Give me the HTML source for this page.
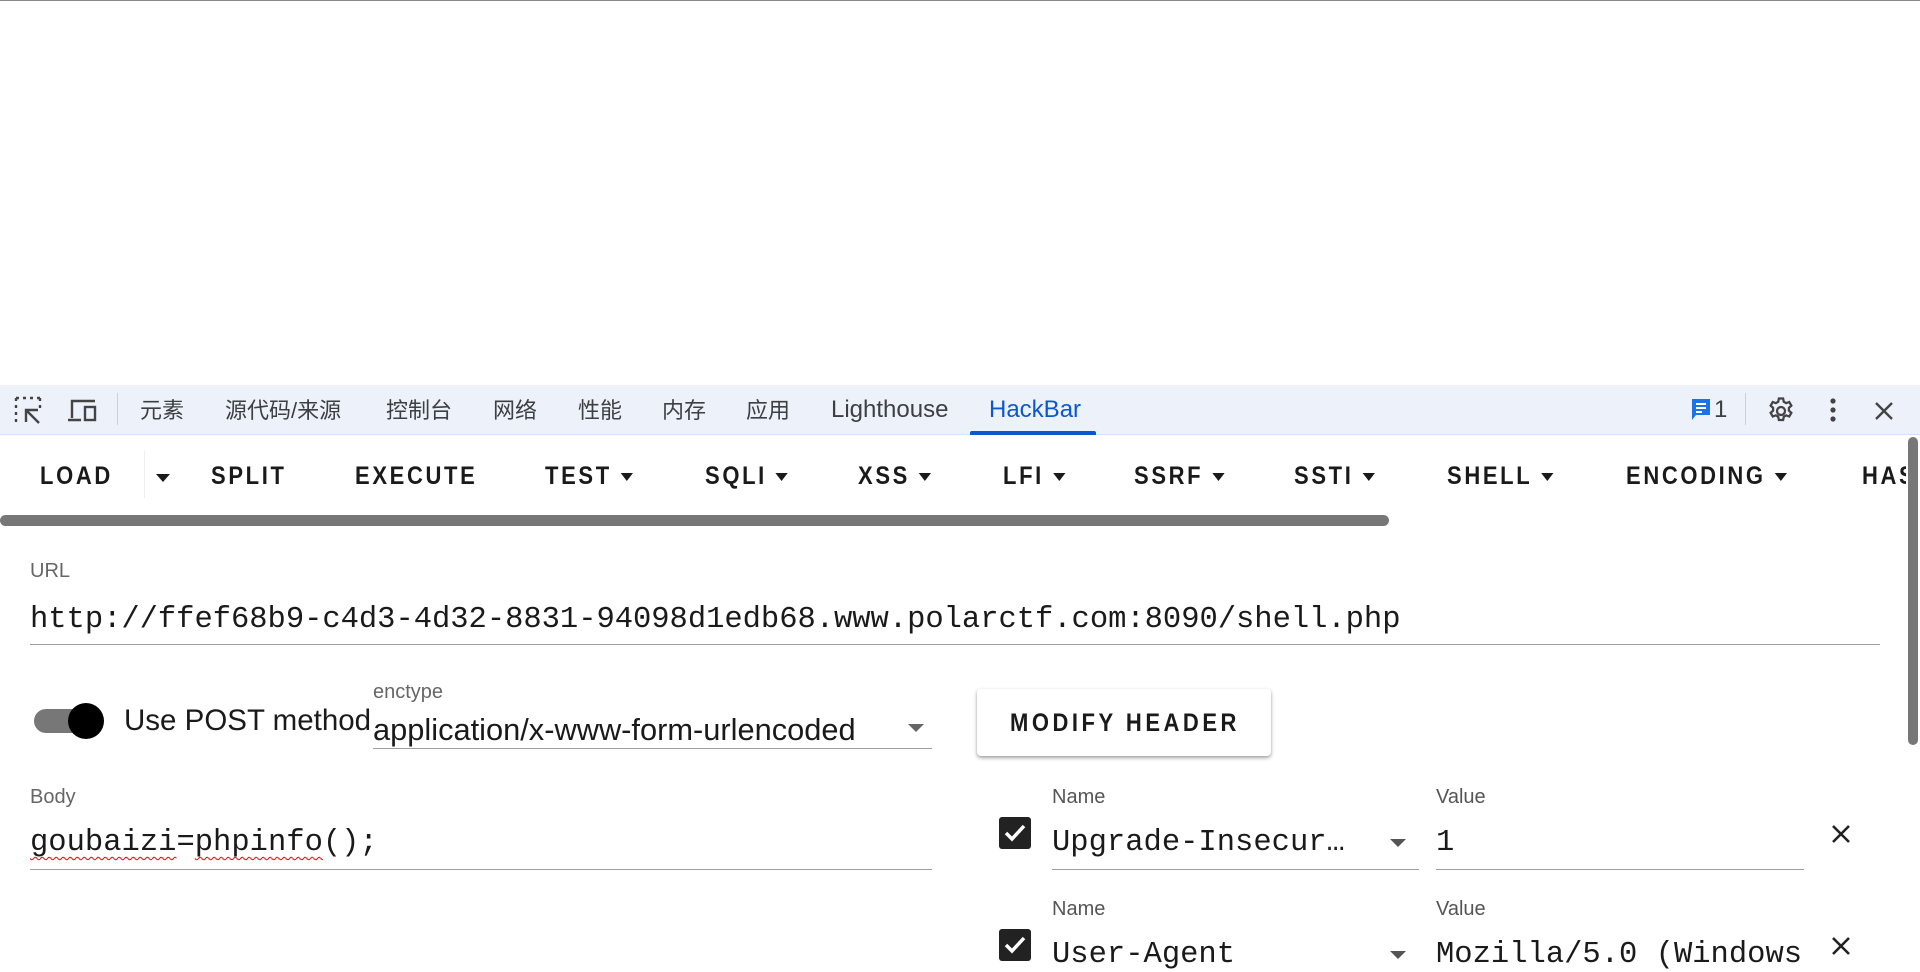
<!DOCTYPE html>
<html><head><meta charset="utf-8"><style>
*{margin:0;padding:0;box-sizing:border-box}
body{width:1920px;height:971px;overflow:hidden;background:#fff;font-family:"Liberation Sans","Noto Sans CJK SC",sans-serif;position:relative;color:#202124}
.a{position:absolute;white-space:nowrap}
.tab{position:absolute;top:397px;font-size:22px;line-height:28px;height:28px;color:#3c4043}
.lat{font-size:24px;top:396px}
.tb{position:absolute;top:462px;font-size:25px;font-weight:bold;letter-spacing:3px;color:#1a1a1a;transform:scaleX(.88);transform-origin:left}
.car{display:inline-block;width:0;height:0;border-left:7px solid transparent;border-right:7px solid transparent;border-top:8px solid #1a1a1a;vertical-align:middle;margin-left:10px}
.lbl{position:absolute;font-size:20px;color:#666}
.mono{position:absolute;font-family:"Liberation Mono",monospace;font-size:30.5px;color:#1a1a1a}
.ul{position:absolute;height:1px;background:#9e9e9e}
.cb{position:absolute;width:32px;height:32px;background:#222;border-radius:3px}
.w{text-decoration:underline wavy #e00;text-decoration-thickness:1px;text-underline-offset:6px}
</style></head><body>
<div class="a" style="left:0;top:0;width:1920px;height:1px;background:#888"></div>
<div class="a" style="left:0;top:385px;width:1920px;height:50px;background:#edf2fa;border-bottom:1px solid #d3e3fd"></div>
<svg class="a" style="left:14px;top:396px" width="32" height="28" viewBox="0 0 32 28" fill="none" stroke="#444" stroke-width="2.4"><path d="M2 2h3M9 2h3M16 2h3M23 2h3M2 2v3M2 9v3M2 16v3M2 23v3M26 2v3M26 9v3"/><path d="M12 26V14h12M12 14l13 13"/></svg>
<svg class="a" style="left:67px;top:398px" width="32" height="26" viewBox="0 0 32 26" fill="none" stroke="#444" stroke-width="2.4"><path d="M5 20V3h23M1 22h13"/><rect x="18" y="9" width="10" height="13"/></svg>
<div class="a" style="left:117px;top:393px;width:1px;height:32px;background:#c8d0dc"></div>
<div class="tab" style="left:140px">元素</div>
<div class="tab" style="left:225px">源代码/来源</div>
<div class="tab" style="left:386px">控制台</div>
<div class="tab" style="left:493px">网络</div>
<div class="tab" style="left:578px">性能</div>
<div class="tab" style="left:662px">内存</div>
<div class="tab" style="left:746px">应用</div>
<div class="tab lat" style="left:831px">Lighthouse</div>
<div class="tab lat" style="left:989px;color:#0b57d0">HackBar</div>
<div class="a" style="left:970px;top:431px;width:126px;height:4px;background:#0b57d0;border-radius:2px 2px 0 0"></div>
<svg class="a" style="left:1690px;top:398px" width="22" height="24" viewBox="0 0 22 24"><path d="M2 1h18v16H6l-4 5z" fill="#1a73e8"/><path d="M6 6h10M6 10h10M6 14h6" stroke="#fff" stroke-width="2"/></svg>
<div class="tab lat" style="left:1714px">1</div>
<div class="a" style="left:1745px;top:393px;width:1px;height:32px;background:#c8d0dc"></div>
<svg class="a" style="left:1766px;top:396px" width="30" height="30" viewBox="0 0 24 24" fill="none" stroke="#444" stroke-width="1.8"><circle cx="12" cy="12" r="3.2"/><path d="M10.3 2h3.4l.5 2.6 1.9 1.1 2.5-.9 1.7 2.9-2 1.8v2.2l2 1.8-1.7 2.9-2.5-.9-1.9 1.1-.5 2.6h-3.4l-.5-2.6-1.9-1.1-2.5.9-1.7-2.9 2-1.8v-2.2l-2-1.8 1.7-2.9 2.5.9 1.9-1.1z"/></svg>
<svg class="a" style="left:1827px;top:397px" width="12" height="28"><circle cx="6" cy="4" r="2.6" fill="#444"/><circle cx="6" cy="13" r="2.6" fill="#444"/><circle cx="6" cy="22" r="2.6" fill="#444"/></svg>
<svg class="a" style="left:1873px;top:400px" width="22" height="22" stroke="#444" stroke-width="2.4"><path d="M3 3l16 16M19 3L3 19"/></svg>

<div class="tb" style="left:40px">LOAD</div>
<div class="a" style="left:144px;top:450px;width:1px;height:48px;background:#eee"></div>
<div class="a" style="left:146px;top:469px"><span class="car"></span></div>
<div class="tb" style="left:211px">SPLIT</div>
<div class="tb" style="left:355px">EXECUTE</div>
<div class="tb" style="left:545px">TEST<span class="car"></span></div>
<div class="tb" style="left:705px">SQLI<span class="car"></span></div>
<div class="tb" style="left:858px">XSS<span class="car"></span></div>
<div class="tb" style="left:1003px">LFI<span class="car"></span></div>
<div class="tb" style="left:1134px">SSRF<span class="car"></span></div>
<div class="tb" style="left:1294px">SSTI<span class="car"></span></div>
<div class="tb" style="left:1447px">SHELL<span class="car"></span></div>
<div class="tb" style="left:1626px">ENCODING<span class="car"></span></div>
<div class="tb" style="left:1862px">HASH</div>
<div class="a" style="left:1906px;top:435px;width:14px;height:536px;background:#fff"></div>
<div class="a" style="left:0;top:515px;width:1389px;height:11px;background:#777;border-radius:6px"></div>
<div class="a" style="left:1908px;top:437px;width:10px;height:308px;background:#777;border-radius:5px"></div>

<div class="lbl" style="left:30px;top:560px">URL</div>
<div class="mono" style="left:30px;top:603px;letter-spacing:-0.03px">http://ffef68b9-c4d3-4d32-8831-94098d1edb68.www.polarctf.com:8090/shell.php</div>
<div class="ul" style="left:30px;top:644px;width:1850px"></div>

<div class="a" style="left:34px;top:709px;width:68px;height:24px;background:#777;border-radius:12px"></div>
<div class="a" style="left:68px;top:703px;width:36px;height:36px;background:#000;border-radius:50%"></div>
<div class="a" style="left:124px;top:704px;font-size:29.5px;color:#1a1a1a">Use POST method</div>
<div class="lbl" style="left:373px;top:681px">enctype</div>
<div class="a" style="left:373px;top:712px;font-size:30.8px;color:#1a1a1a">application/x-www-form-urlencoded</div>
<div class="a" style="left:898px;top:719px"><span class="car" style="border-top-color:#666;border-left-width:8px;border-right-width:8px;border-top-width:8px"></span></div>
<div class="ul" style="left:373px;top:748px;width:559px"></div>
<div class="a" style="left:977px;top:689px;width:294px;height:67px;background:#fff;border-radius:4px;box-shadow:0 2px 4px rgba(0,0,0,.3),0 1px 2px rgba(0,0,0,.15)"></div>
<div class="tb" style="left:1010px;top:709px;letter-spacing:4px">MODIFY HEADER</div>

<div class="lbl" style="left:30px;top:786px">Body</div>
<div class="mono" style="left:30px;top:826px"><span class="w">goubaizi</span>=<span class="w">phpinfo</span>();</div>
<div class="ul" style="left:30px;top:869px;width:902px"></div>

<div class="cb" style="left:999px;top:817px"></div>
<svg class="a" style="left:1003px;top:822px" width="24" height="22" stroke="#fff" stroke-width="3.5" fill="none"><path d="M3 11l6 6L21 4"/></svg>
<div class="lbl" style="left:1052px;top:786px;color:#555">Name</div>
<div class="mono" style="left:1052px;top:826px">Upgrade-Insecur…</div>
<div class="a" style="left:1380px;top:834px"><span class="car" style="border-top-color:#555;border-left-width:8px;border-right-width:8px;border-top-width:8px"></span></div>
<div class="ul" style="left:1052px;top:869px;width:367px"></div>
<div class="lbl" style="left:1436px;top:786px;color:#555">Value</div>
<div class="mono" style="left:1436px;top:826px">1</div>
<div class="ul" style="left:1436px;top:869px;width:368px"></div>
<svg class="a" style="left:1830px;top:823px" width="22" height="22" stroke="#222" stroke-width="2.6"><path d="M3 3l16 16M19 3L3 19"/></svg>

<div class="cb" style="left:999px;top:929px"></div>
<svg class="a" style="left:1003px;top:934px" width="24" height="22" stroke="#fff" stroke-width="3.5" fill="none"><path d="M3 11l6 6L21 4"/></svg>
<div class="lbl" style="left:1052px;top:898px;color:#555">Name</div>
<div class="mono" style="left:1052px;top:938px">User-Agent</div>
<div class="a" style="left:1380px;top:946px"><span class="car" style="border-top-color:#555;border-left-width:8px;border-right-width:8px;border-top-width:8px"></span></div>
<div class="lbl" style="left:1436px;top:898px;color:#555">Value</div>
<div class="mono" style="left:1436px;top:938px">Mozilla/5.0 (Windows</div>
<svg class="a" style="left:1830px;top:935px" width="22" height="22" stroke="#222" stroke-width="2.6"><path d="M3 3l16 16M19 3L3 19"/></svg>
</body></html>
